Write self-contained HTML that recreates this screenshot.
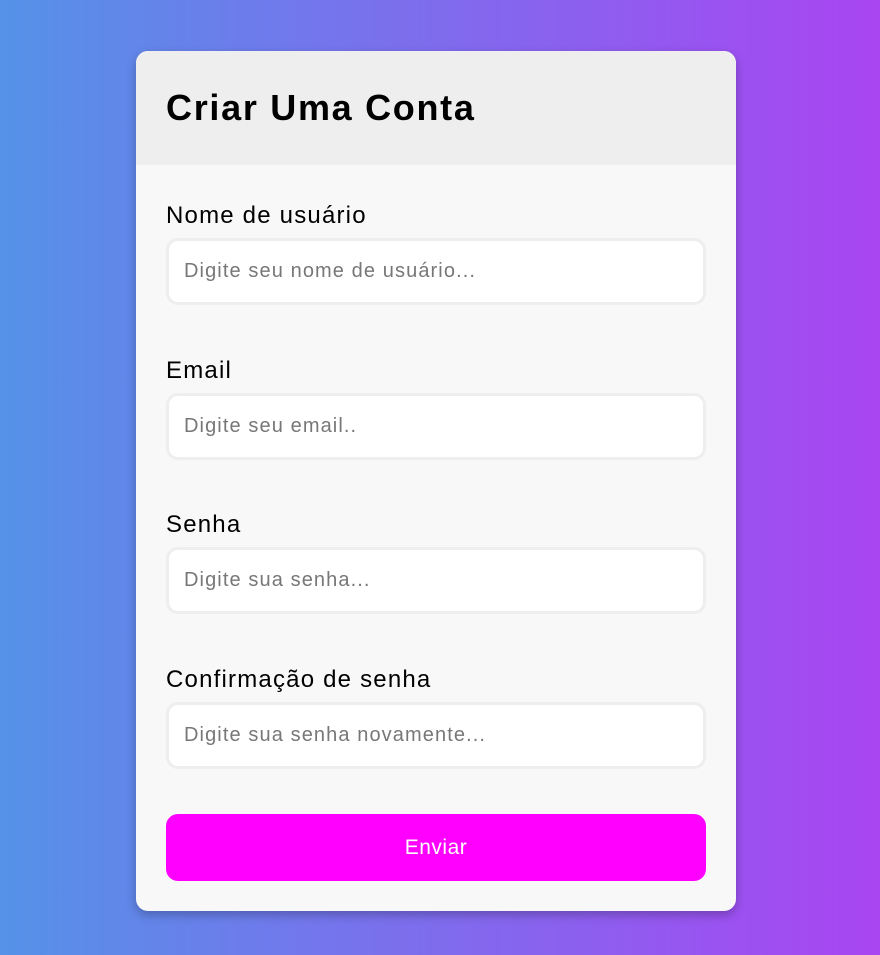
<!DOCTYPE html>
<html><head><meta charset="utf-8"><style>
*{box-sizing:border-box;margin:0;padding:0}
html,body{width:880px;height:955px;overflow:hidden}
body{background:linear-gradient(to right,#5592e8,#a945f2);font-family:"Liberation Sans",sans-serif;position:relative}
.card{position:absolute;left:136px;top:51px;width:600px;height:860px;background:#f8f8f8;border-radius:12px;overflow:hidden;box-shadow:0 4px 10px rgba(0,0,0,.25)}
.head{height:114px;background:#eeeeee;padding-left:30px}
.head h1{font-size:36px;font-weight:bold;line-height:114px;color:#000;letter-spacing:1.7px}
.f{position:absolute;left:30px;width:540px}
.f label{display:block;font-size:24px;color:#000;height:35px;line-height:26px;letter-spacing:1.2px}
.f .in{height:67px;background:#fff;border:3px solid #eee;border-radius:12px;padding-left:15px;line-height:61px;font-size:20px;color:#777;letter-spacing:1.1px}
.btn{position:absolute;left:30px;top:763px;width:540px;height:67px;background:#ff00ff;border-radius:12px;color:#fff;font-size:21px;text-align:center;line-height:67px;letter-spacing:0.5px}
</style></head><body>
<div class="card">
<div class="head"><h1>Criar Uma Conta</h1></div>
<div class="f" style="top:152px"><label>Nome de usuário</label><div class="in">Digite seu nome de usuário...</div></div>
<div class="f" style="top:307px"><label>Email</label><div class="in">Digite seu email..</div></div>
<div class="f" style="top:461px"><label>Senha</label><div class="in">Digite sua senha...</div></div>
<div class="f" style="top:616px"><label>Confirmação de senha</label><div class="in">Digite sua senha novamente...</div></div>
<div class="btn">Enviar</div>
</div>
</body></html>
